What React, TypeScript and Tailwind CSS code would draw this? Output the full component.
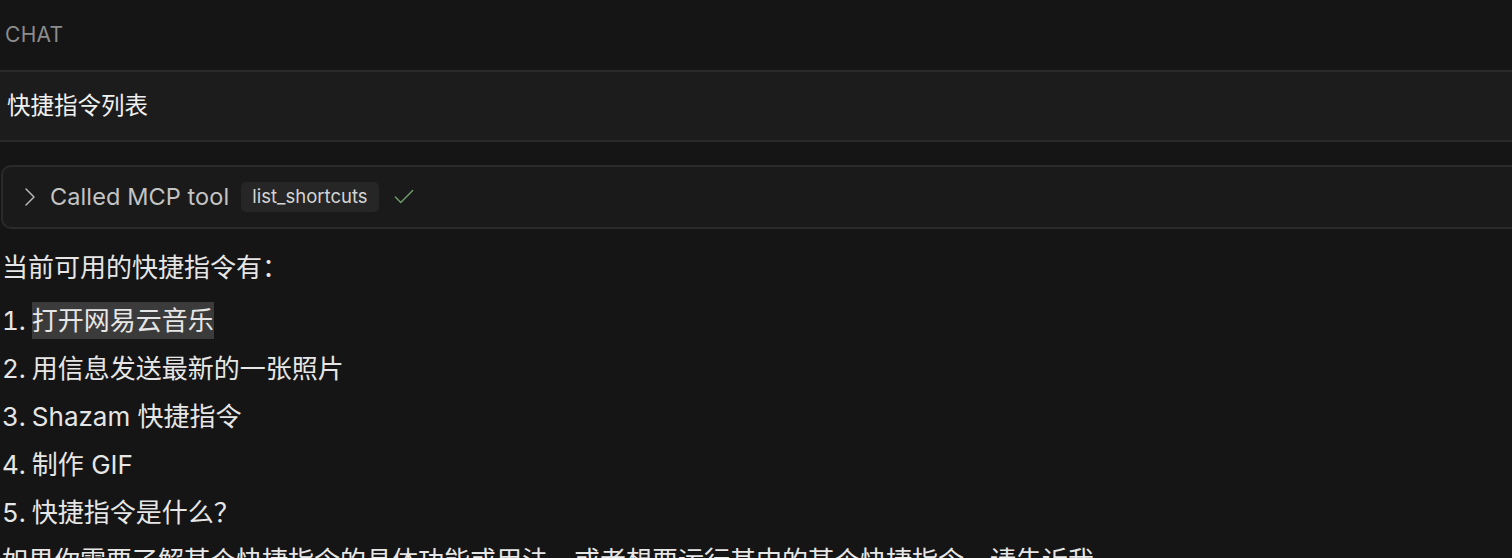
import { ChevronRight, Check } from "lucide-react"

const shortcuts = ["打开网易云音乐", "用信息发送最新的一张照片", "Shazam 快捷指令", "制作 GIF", "快捷指令是什么？"]

const font = "font-['Inter','Noto_Sans_CJK_SC',sans-serif]"

export default function App() {
    return (
        <div className={`h-[558px] w-[1512px] overflow-hidden bg-[#151515] ${font}`}>
            <header className="h-[70px] flex items-center px-[5px]">
                <span className="text-[21px] text-[#8c8c8c] tracking-[0.3px]">CHAT</span>
            </header>

            <div className="h-[72px] flex items-center px-[7px] bg-[#1c1c1c] border-y-2 border-[#2a2a2a]">
                <span className="text-[23.5px] text-[#f0f0f0]">快捷指令列表</span>
            </div>

            <div className="mt-[23px] ml-px h-[64px] flex items-center pl-[11px] bg-[#1a1a1a] border-2 border-[#2a2a2a] rounded-[10px] rounded-r-none border-r-0">
                <ChevronRight size={32} strokeWidth={1.1} className="text-[#b8b8b8]" />
                <span className="ml-[4px] text-[23.5px] text-[#c4c4c4] tracking-[0.1px]">Called MCP tool</span>
                <span className="ml-[12px] h-[30px] flex items-center px-[11px] rounded-[5px] bg-[#262626] text-[18.5px] text-[#d4d4d4]">list_shortcuts</span>
                <Check size={26} strokeWidth={1.3} className="ml-[12px] text-[#6f9e6f]" />
            </div>

            <div className="mt-[15px] text-[26px] text-[#e6e6e6]">
                <p className="leading-[48px] mb-[5px] pl-[2px]">当前可用的快捷指令有：</p>
                {
                    shortcuts.map((s, i) =>
                        <p key={s} className="leading-[48px] pl-[2px]">
                            <span className="tabular-nums">{i + 1}.</span><span className="inline-block w-[6px]" />
                            <span className={i === 0 ? "bg-[#3b3b3b] py-[3px]" : ""}>{s}</span>
                        </p>
                    )
                }
                <p className="leading-[48px] pl-[2px] whitespace-nowrap">如果你需要了解某个快捷指令的具体功能或用法，或者想要运行其中的某个快捷指令，请告诉我。</p>
            </div>
        </div>
    )
}
